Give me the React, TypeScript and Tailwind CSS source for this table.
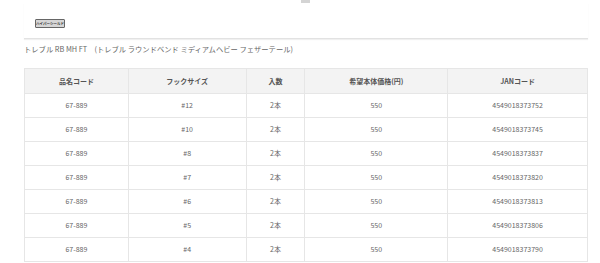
const rows = [
  { size: "#12", jan: "4549018373752" },
  { size: "#10", jan: "4549018373745" },
  { size: "#8", jan: "4549018373837" },
  { size: "#7", jan: "4549018373820" },
  { size: "#6", jan: "4549018373813" },
  { size: "#5", jan: "4549018373806" },
  { size: "#4", jan: "4549018373790" },
];

const cols = ["w-[104px]", "w-[118px]", "w-[59px]", "w-[143px]", "w-[140px]"];

export default function App() {
  return (
    <div
      className="w-[600px] h-[263px] overflow-hidden bg-white text-[#666] leading-none"
      style={{ fontFamily: '"Noto Sans CJK JP", "Noto Sans", sans-serif' }}
    >
      <div className="flex h-[3px] justify-center">
        <div className="ml-[10px] h-[3px] w-[9px] bg-[#d4d4d4]" />
      </div>

      <div className="ml-[24px] mr-[12px]">
        {/* badge */}
        <div className="flex pl-[11px] pt-[16px] pb-[10px] border-b border-[#e2e2e2] shadow-[0_1px_1px_rgba(0,0,0,0.06)]">
          <span className="flex h-[9px] w-[30px] items-center justify-center rounded-[1px] border border-[#666] bg-[#d6d6d6] text-[3.5px] leading-none font-bold text-[#333]">
            ハイパーシールド
          </span>
        </div>

        <p className="mt-[4px] h-[12px] text-[7.3px] leading-[12px] text-[#666]">
          トレブル RB MH FT　(トレブル ラウンドベンド ミディアムヘビー フェザーテール)
        </p>

        <table className="mt-[13px] border-collapse text-[7px] leading-none text-[#666]">
          <thead>
            <tr className="h-[25px] bg-[#f3f3f3]">
              {["品名コード", "フックサイズ", "入数", "希望本体価格(円)", "JANコード"].map((h, i) => (
                <th key={h} className={`${cols[i]} border border-[#e6e6e6] p-0 font-bold text-center text-[#555]`}>
                  {h}
                </th>
              ))}
            </tr>
          </thead>
          <tbody>
            {rows.map((r) => (
              <tr key={r.jan} className="h-[24px]">
                <td className="border border-[#e6e6e6] p-0 text-center">67-889</td>
                <td className="border border-[#e6e6e6] p-0 text-center">{r.size}</td>
                <td className="border border-[#e6e6e6] p-0 text-center">2本</td>
                <td className="border border-[#e6e6e6] p-0 text-center">550</td>
                <td className="border border-[#e6e6e6] p-0 text-center">{r.jan}</td>
              </tr>
            ))}
          </tbody>
        </table>
      </div>
    </div>
  );
}
